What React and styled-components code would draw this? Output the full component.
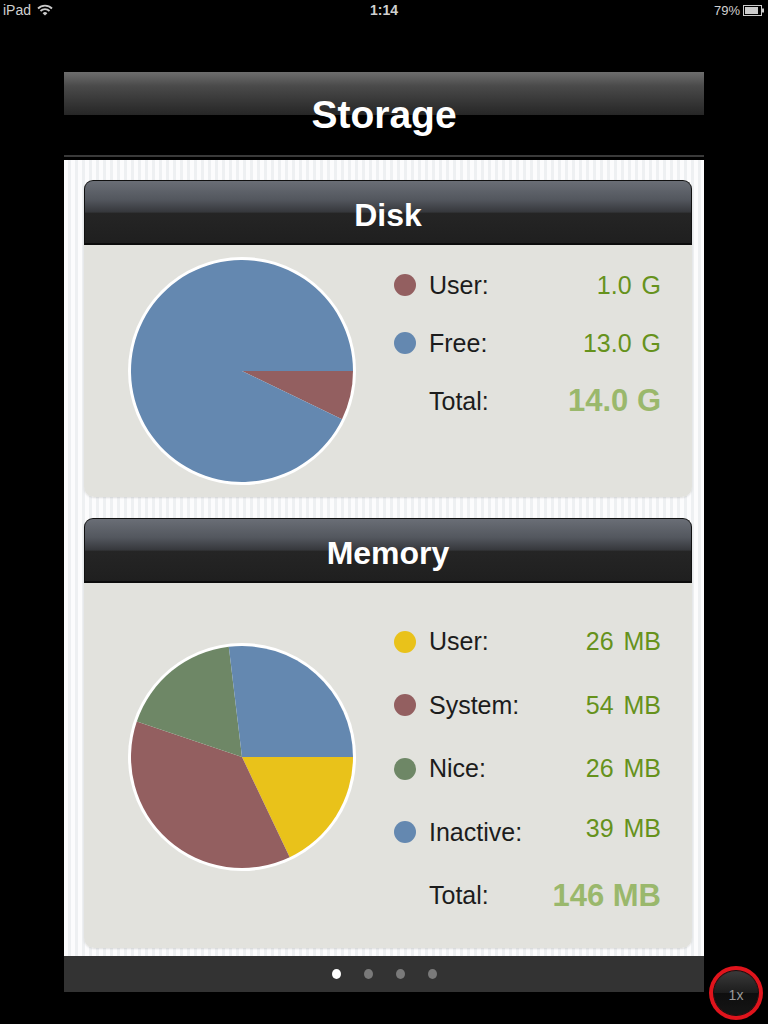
import React from 'react';
import styled, { createGlobalStyle } from 'styled-components';

const disk = [
  { label: 'User:', value: '1.0 G', color: '#935f60', amount: 1 },
  { label: 'Free:', value: '13.0 G', color: '#6488b0', amount: 13 },
];

const memory = [
  { label: 'User:', value: '26 MB', color: '#e9c21a', amount: 26 },
  { label: 'System:', value: '54 MB', color: '#935f60', amount: 54 },
  { label: 'Nice:', value: '26 MB', color: '#6e8766', amount: 26 },
  { label: 'Inactive:', value: '39 MB', color: '#6488b0', amount: 39, lift: 4 },
];

function slicePath(cx, cy, r, a0, a1) {
  const rad = (a) => (a * Math.PI) / 180;
  const x0 = cx + r * Math.cos(rad(a0));
  const y0 = cy + r * Math.sin(rad(a0));
  const x1 = cx + r * Math.cos(rad(a1));
  const y1 = cy + r * Math.sin(rad(a1));
  const large = a1 - a0 > 180 ? 1 : 0;
  return `M${cx} ${cy} L${x0} ${y0} A${r} ${r} 0 ${large} 1 ${x1} ${y1} Z`;
}

function Pie({ items }) {
  const total = items.reduce((s, i) => s + i.amount, 0);
  let start = 0;
  return (
    <svg width="230" height="230" viewBox="0 0 230 230">
      <circle cx="115" cy="115" r="114" fill="#fff" />
      {items.map((item) => {
        const sweep = (item.amount / total) * 360;
        const d = slicePath(115, 115, 111, start, start + sweep);
        start += sweep;
        return <path key={item.label} d={d} fill={item.color} />;
      })}
    </svg>
  );
}

function StatCard({ title, items, total, pieTop, legendTop, rowHeight, height }) {
  return (
    <Card>
      <CardHeader>{title}</CardHeader>
      <CardBody $height={height}>
        <PieWrap $top={pieTop}>
          <Pie items={items} />
        </PieWrap>
        <Legend $top={legendTop}>
          {items.map((item) => (
            <Row key={item.label} $h={rowHeight}>
              <Dot $color={item.color} />
              <Label>{item.label}</Label>
              <Value $lift={item.lift}>{item.value}</Value>
            </Row>
          ))}
          <Row $h={rowHeight}>
            <span />
            <Label>Total:</Label>
            <Value $total>{total}</Value>
          </Row>
        </Legend>
      </CardBody>
    </Card>
  );
}

function App() {
  return (
    <>
      <GlobalStyle />
      <StatusBar>
        <StatusLeft>
          iPad
          <svg width="16" height="12" viewBox="0 0 16 12">
            <path d="M1 4.5 A10 10 0 0 1 15 4.5" stroke="#ccc" strokeWidth="1.8" fill="none" />
            <path d="M3.5 7 A6.5 6.5 0 0 1 12.5 7" stroke="#ccc" strokeWidth="1.8" fill="none" />
            <path d="M8 11.5 L5.6 9.2 A3.4 3.4 0 0 1 10.4 9.2 Z" fill="#ccc" />
          </svg>
        </StatusLeft>
        <Clock>1:14</Clock>
        <StatusRight>
          79%
          <svg width="22" height="11" viewBox="0 0 22 11">
            <rect x="0.5" y="0.5" width="18" height="10" fill="none" stroke="#ccc" />
            <rect x="2" y="2" width="13" height="7" fill="#ccc" />
            <rect x="19" y="3.5" width="2" height="4" fill="#ccc" />
          </svg>
        </StatusRight>
      </StatusBar>
      <Screen>
        <TitleBar>Storage</TitleBar>
        <Panel>
          <StatCard
            title="Disk"
            items={disk}
            total="14.0 G"
            pieTop={11}
            legendTop={11}
            rowHeight={58}
            height={252}
          />
          <StatCard
            title="Memory"
            items={memory}
            total="146 MB"
            pieTop={59}
            legendTop={27}
            rowHeight={63.5}
            height={365}
          />
        </Panel>
        <Footer>
          <PageDot $active />
          <PageDot />
          <PageDot />
          <PageDot />
        </Footer>
      </Screen>
      <ZoomButton>1x</ZoomButton>
    </>
  );
}

const GlobalStyle = createGlobalStyle`
  body {
    margin: 0;
    background: #000;
    font-family: "Liberation Sans", Arial, sans-serif;
  }
`;

const StatusBar = styled.div`
  height: 20px;
  display: grid;
  grid-template-columns: 1fr auto 1fr;
  align-items: center;
  padding: 0 3px;
  color: #d0d0d0;
  font-size: 14px;
`;

const StatusLeft = styled.div`
  display: flex;
  align-items: center;
  gap: 6px;
`;

const Clock = styled.div`
  font-size: 14px;
  font-weight: bold;
`;

const StatusRight = styled.div`
  display: flex;
  align-items: center;
  justify-content: flex-end;
  gap: 3px;
  font-size: 13px;
`;

const Screen = styled.div`
  width: 640px;
  margin: 52px 0 0 64px;
`;

const TitleBar = styled.div`
  height: 85px;
  display: flex;
  align-items: center;
  justify-content: center;
  padding-top: 2px;
  box-sizing: border-box;
  background: linear-gradient(#6e6e6e 0, #4a4a4a 14px, #262626 43px, #000 43px);
  border-bottom: 2px solid #3a3a3a;
  margin-bottom: 3px;
  color: #fff;
  font-size: 39px;
  font-weight: bold;
`;

const Panel = styled.div`
  height: 796px;
  box-sizing: border-box;
  padding: 20px 12px 0 20px;
  display: flex;
  flex-direction: column;
  gap: 21px;
  background: repeating-linear-gradient(90deg, #fcfcfd 0, #fcfcfd 4px, #eef0f2 4px, #eef0f2 7px);
`;

const Card = styled.div`
  border-radius: 10px;
  box-shadow: 0 1px 2px rgba(0, 0, 0, 0.12);
`;

const CardHeader = styled.div`
  height: 65px;
  box-sizing: border-box;
  display: flex;
  align-items: center;
  justify-content: center;
  padding-top: 6px;
  border: 1px solid #111;
  border-bottom: 2px solid #0c0c0c;
  border-radius: 9px 9px 0 0;
  background: linear-gradient(#6a6e76 0, #53575e 30%, #36383c 50%, #252525 52%, #1f1f1f 100%);
  color: #fff;
  font-size: 32px;
  font-weight: bold;
`;

const CardBody = styled.div`
  height: ${(p) => p.$height}px;
  box-sizing: border-box;
  display: flex;
  align-items: flex-start;
  padding: 0 31px 0 43px;
  background: #e2e2dd;
  border-radius: 0 0 10px 10px;
`;

const PieWrap = styled.div`
  margin-top: ${(p) => p.$top}px;
  width: 230px;
  height: 230px;
  flex: none;
`;

const Legend = styled.div`
  margin-left: auto;
  width: 267px;
  padding-top: ${(p) => p.$top}px;
`;

const Row = styled.div`
  height: ${(p) => p.$h}px;
  display: grid;
  grid-template-columns: 22px 1fr auto;
  column-gap: 13px;
  align-items: center;
`;

const Dot = styled.span`
  width: 22px;
  height: 22px;
  border-radius: 50%;
  background: ${(p) => p.$color};
`;

const Label = styled.span`
  color: #1c1c1c;
  font-size: 25px;
`;

const Value = styled.span`
  color: ${(p) => (p.$total ? '#9ab86c' : '#66921c')};
  font-size: ${(p) => (p.$total ? '31px' : '25px')};
  font-weight: ${(p) => (p.$total ? 'bold' : 'normal')};
  word-spacing: ${(p) => (p.$total ? '0' : '3px')};
  margin-bottom: ${(p) => (p.$lift ? p.$lift * 2 : 0)}px;
`;

const Footer = styled.div`
  height: 36px;
  background: #333;
  display: flex;
  align-items: center;
  justify-content: center;
  gap: 23px;
`;

const PageDot = styled.span`
  width: 9px;
  height: 10px;
  border-radius: 50%;
  background: ${(p) => (p.$active ? '#fff' : '#7a7a7a')};
`;

const ZoomButton = styled.div`
  position: absolute;
  left: 714px;
  top: 971px;
  width: 44px;
  height: 44px;
  border-radius: 50%;
  display: flex;
  align-items: center;
  justify-content: center;
  padding-top: 3px;
  box-sizing: border-box;
  background: linear-gradient(#3a3a3a, #1c1c1c 50%, #0e0e0e 50%, #151515);
  color: #9a9a9a;
  font-size: 14px;
  box-shadow: 0 0 0 1px #111, 0 0 0 5px #e0141c;
`;

export default App;
